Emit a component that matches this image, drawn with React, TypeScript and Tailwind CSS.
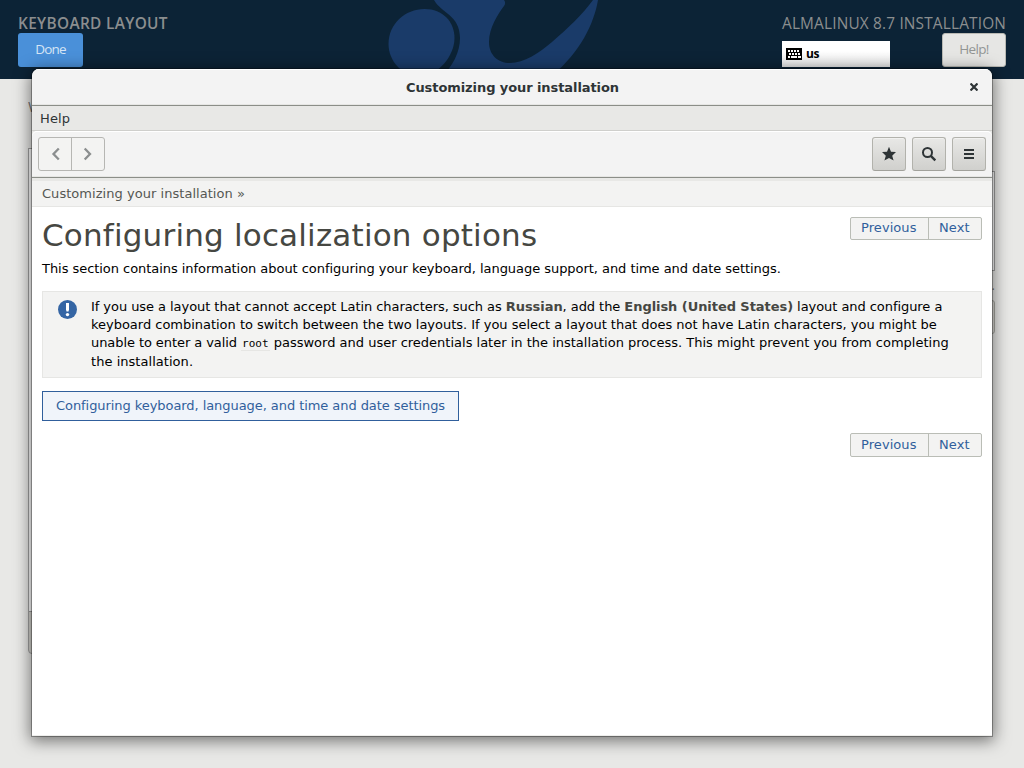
import React from "react";

function BackgroundLogo() {
  return (
    <svg className="absolute left-[340px] top-0" width="340" height="79" viewBox="0 0 340 79" fill="#1a3b69">
      <path d="M84.500 9C103 9 114.500 22 114.500 38C114.500 56 98 76 80 76C61 76 48.500 60 48.500 44C48.500 24 65 9 84.500 9Z" />
      <path d="M94 0H164C165.500 2 165.500 4 164 6C158 14 149 28 149 42C149 55 158 63 170 63C184 63 199 53 212 42C228 28 242 15 253 0H258C254 24 240 52 213 75L208 79H100C113 66 120 52 120 38C120 15 101 13 94 0Z" />
    </svg>
  );
}

function KeyboardIcon() {
  return (
    <svg width="16" height="12" viewBox="0 0 16 12" shapeRendering="crispEdges">
      <rect width="16" height="12" rx="1" fill="#000" />
      <path fill="#fff" d="M2 2h2v2H2zM5 2h2v2H5zM8 2h2v2H8zM11 2h2v2h-2zM3 5h2v2H3zM6 5h2v2H6zM9 5h2v2H9zM12 5h2v2h-2zM2 8h2v2H2zM5 8h6v2H5zM12 8h3v2h-3z" />
    </svg>
  );
}

function Header() {
  return (
    <header className="relative flex h-[79px] justify-between overflow-hidden bg-[#0c2336] px-[18px] pt-[13px] text-[#8b8e8f]">
      <BackgroundLogo />
      <div className="relative flex flex-col items-start">
        <h1 className="h-5 whitespace-nowrap text-[15.4px] font-semibold leading-[22px] tracking-[0.33px]">KEYBOARD LAYOUT</h1>
        <button className="h-[34px] w-[65px] rounded-[3px] bg-[#4a90d9] pb-px text-[13.500px] tracking-[-0.8px] text-[#d6e5f5]">Done</button>
      </div>
      <div className="relative w-[224px]">
        <div className="h-5 whitespace-nowrap text-[15.4px] leading-[22px] tracking-[0.17px]">ALMALINUX 8.7 INSTALLATION</div>
        <div className="flex items-start justify-between">
          <div className="mt-2 flex h-[26px] w-[108px] items-center gap-1 bg-linear-to-b from-white from-40% to-[#e6e6e6] pl-1 text-[12px] font-bold tracking-[-0.3px] text-black">
            <KeyboardIcon />
            <span>us</span>
          </div>
          <button className="h-[34px] w-16 rounded-[3px] border border-[#b9b9b3] bg-[#e6e6e4] pb-px text-[13.500px] tracking-[-0.65px] text-[#929594]">Help!</button>
        </div>
      </div>
    </header>
  );
}

function Backdrop() {
  return (
    <main className="flex h-[689px] justify-between pl-7 pr-[29px] pt-[19px]">
      <div className="flex w-40 flex-col">
        <div className="h-[50px] w-1 overflow-hidden text-[15px] leading-[17px] text-[#77797a]">W</div>
        <div className="h-[464px] border border-[#a1a1a1] bg-white" />
        <div className="-mt-px h-[43px] rounded-b-[4px] border border-[#a1a1a1] bg-[#d6d5d0]" />
      </div>
      <div className="flex w-40 flex-col items-end pt-[73px]">
        <div className="h-[100px] w-full border border-[#a1a1a1] bg-white" />
        <div className="h-[29px] pt-[5px] text-[13px] text-[#77797a]">below.</div>
        <div className="h-[34px] w-full rounded-[3px] border border-[#a9a9a2] bg-[#dcdbd6]" />
      </div>
    </main>
  );
}

function ToolButton({ label, children }: { label: string; children: React.ReactNode }) {
  return (
    <button
      aria-label={label}
      className="flex h-[34px] w-[34px] items-center justify-center rounded-[3px] border border-[#b2b2ac] border-b-[#a1a19b] bg-linear-to-b from-[#e8e8e6] to-[#d0d0cd] shadow-[inset_0_1px_#f1f1f0]"
    >
      {children}
    </button>
  );
}

function Toolbar() {
  return (
    <div className="bg-[#e8e8e6]">
      <div className="flex h-[47px] items-center justify-between rounded-t-[5px] border-b border-[#8b8e88] bg-[#f3f3f3] px-1.5 shadow-[inset_0_1px_#fff,inset_0_-1px_#e6e6e4]">
        <div className="flex h-[34px] w-[67px] rounded-[3px] border border-[#b6b6b3] bg-[#f3f3f2]">
          <button aria-label="Back" className="flex w-[33px] items-center justify-center border-r border-[#b6b6b3] pl-px">
            <svg width="10" height="14" viewBox="0 0 10 14" fill="none" stroke="#8b8e8f" strokeWidth="2.300"><path d="M7.800 1.500L2.500 7l5.300 5.500" /></svg>
          </button>
          <button aria-label="Forward" className="flex w-8 items-center justify-center">
            <svg width="10" height="14" viewBox="0 0 10 14" fill="none" stroke="#8b8e8f" strokeWidth="2.300"><path d="M1.700 1.500L7 7l-5.300 5.500" /></svg>
          </button>
        </div>
        <div className="flex gap-1.5">
          <ToolButton label="Bookmarks">
            <svg width="16" height="16" viewBox="0 0 16 16" fill="#2e3436"><path d="M8 .8l2 4.900 5 .3-3.800 3.700 1.400 4.900L8 12l-4.600 2.600 1.400-4.900L1 6l5-.3z" /></svg>
          </ToolButton>
          <ToolButton label="Search">
            <svg width="16" height="16" viewBox="0 0 16 16" fill="none" stroke="#2e3436"><circle cx="6.500" cy="6.500" r="4.500" strokeWidth="2" /><path d="M9.800 9.800l4.500 4.500" strokeWidth="2.400" /></svg>
          </ToolButton>
          <ToolButton label="Menu">
            <svg width="10" height="10" viewBox="0 0 10 10" fill="#2e3436"><path d="M0 0h10v2H0zM0 4h10v2H0zM0 8h10v2H0z" /></svg>
          </ToolButton>
        </div>
      </div>
    </div>
  );
}

function PageLinks({ tall = false }: { tall?: boolean }) {
  return (
    <nav className={`flex w-[132px] shrink-0 rounded-[2px] border border-[#babdb6] bg-[#f3f3f2] text-[13px] leading-5 tracking-[0.07px] text-[#305f9c] ${tall ? "h-6 pt-px" : "h-[23px]"}`}>
      <a className={`w-[78px] border-r border-[#babdb6] pl-2.5 ${tall ? "-mt-px pt-px" : ""}`}>Previous</a>
      <a className="w-[52px] pl-2.5">Next</a>
    </nav>
  );
}

function HelpWindow() {
  return (
    <section className="absolute left-8 top-[69px] flex h-[667px] w-[960px] flex-col overflow-hidden rounded-t-[7px] border-b border-[#eeeeec] bg-white font-['DejaVu_Sans',sans-serif] text-[13px]">
      <div className="grid h-[37px] shrink-0 grid-cols-[1fr_auto_1fr] items-center border-b border-[#8b8e88] bg-[#f3f3f3] shadow-[inset_0_1px_#fff,inset_0_-1px_#e6e6e4]">
        <h2 className="col-start-2 pl-px pt-px font-bold tracking-[-0.08px] text-[#2e3436]">Customizing your installation</h2>
        <button aria-label="Close" className="mr-[14px] justify-self-end">
          <svg width="8" height="8" viewBox="0 0 8 8" stroke="#2e3436" strokeWidth="2.200"><path d="M.500.500l7 7M7.500.500l-7 7" /></svg>
        </button>
      </div>
      <div className="h-[25px] shrink-0 border-b border-[#cfcfcc] bg-[#e8e8e6] pl-2 leading-[25px] tracking-[0.1px] text-[#2e3436]">Help</div>
      <Toolbar />
      <div className="h-[29px] shrink-0 border-b border-t-3 border-b-[#e6e6e4] border-t-[#e8e8e6] bg-[#f3f3f2] pl-2.5 leading-[25px] tracking-[0.04px] text-[#555753]">Customizing your installation »</div>
      <article className="flex flex-col px-2.5 pt-2.5 text-black">
        <div className="flex h-[43px] items-start justify-between">
          <h1 className="text-[31px] leading-9 tracking-[0.19px] text-[#464742]">Configuring localization options</h1>
          <PageLinks />
        </div>
        <p className="whitespace-nowrap leading-[18px] tracking-[-0.047px]">This section contains information about configuring your keyboard, language support, and time and date settings.</p>
        <div className="mt-[13px] flex h-[87px] border border-[#e6e6e4] bg-[#f3f3f2] pl-[15px] pt-[6px]">
          <svg className="mr-[13px] mt-[2px] shrink-0" width="20" height="20" viewBox="0 0 20 20"><circle cx="9.500" cy="9.500" r="9.500" fill="#3465a4" /><path d="M8 3h3v6.500l-.5 2h-2l-.5-2z" fill="#fff" /><circle cx="9.500" cy="14.600" r="1.700" fill="#fff" /></svg>
          <p className="whitespace-nowrap leading-[18px]">
            <span className="tracking-[-0.058px]">If you use a layout that cannot accept Latin characters, such as <b className="text-[#464742]">Russian</b>, add the <b className="text-[#464742]">English (United States)</b> layout and configure a</span><br />
            <span className="tracking-[-0.02px]">keyboard combination to switch between the two layouts. If you select a layout that does not have Latin characters, you might be</span><br />
            <span className="tracking-[-0.075px]">unable to enter a valid</span> <code className="border-b border-[#e6e6e4] px-px font-['DejaVu_Sans_Mono',monospace] text-[11px] leading-none">root</code> password and user credentials later in the installation process. This might prevent you from completing<br />
            <span className="inline-block pt-px tracking-[0.04px]">the installation.</span>
          </p>
        </div>
        <a className="mt-[13px] h-[30px] w-[417px] whitespace-nowrap border border-[#305f9c] bg-[#f0f4fa] pl-[13px] leading-7 tracking-[-0.065px] text-[#305f9c]">Configuring keyboard, language, and time and date settings</a>
        <div className="mt-3 flex justify-end"><PageLinks tall /></div>
      </article>
    </section>
  );
}

export default function App() {
  return (
    <div className="relative h-[768px] w-[1024px] overflow-hidden bg-[#e8e8e6] font-['Open_Sans',sans-serif]">
      <Header />
      <Backdrop />
      <div className="absolute left-8 top-[69px] h-[667px] w-[960px] rounded-t-[7px] shadow-[0_0_0_1px_rgba(0,0,0,0.3),0_3px_16px_2px_rgba(0,0,0,0.5)]" />
      <HelpWindow />
    </div>
  );
}
